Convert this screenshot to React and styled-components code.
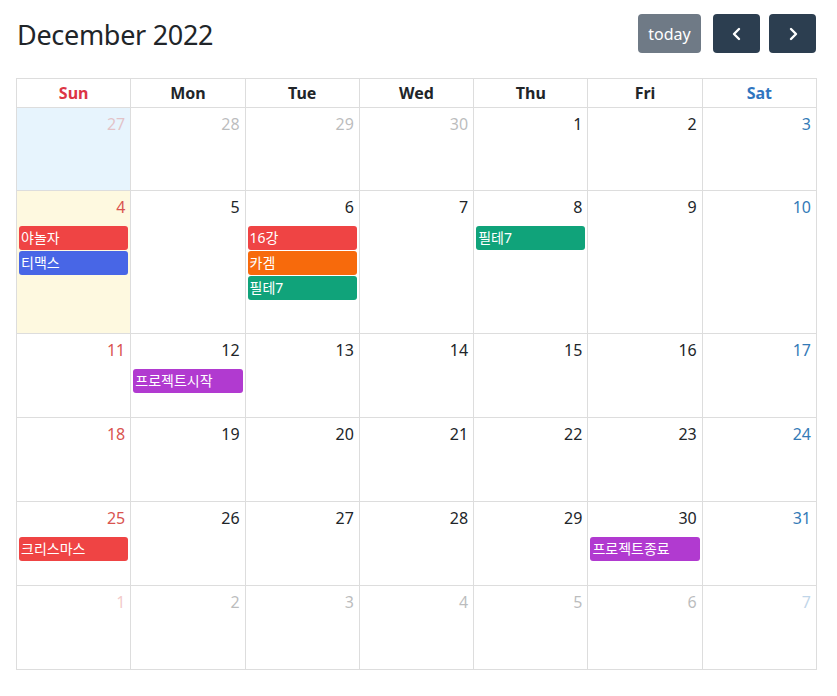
import React from "react";
import styled, { createGlobalStyle } from "styled-components";

const GlobalStyle = createGlobalStyle`
  body {
    margin: 0;
    background: #ffffff;
    font-family: "Noto Sans", "Noto Sans CJK KR", sans-serif;
    color: #212529;
  }
`;

const Page = styled.div`
  width: 800px;
  padding: 14px 0 0 16px;
`;

const Toolbar = styled.div`
  display: flex;
  align-items: center;
  justify-content: space-between;
  height: 39px;
  margin-bottom: 25px;
`;

const Title = styled.h2`
  margin: 2px 0 0 1px;
  font-size: 27px;
  font-weight: 400;
  line-height: 39px;
  color: #212529;
  letter-spacing: -0.3px;
`;

const Buttons = styled.div`
  display: flex;
  align-items: center;
`;

const Button = styled.button`
  height: 39px;
  width: ${({ $width }) => $width}px;
  margin-left: ${({ $gap }) => $gap}px;
  border: none;
  border-radius: 4px;
  background-color: ${({ $muted }) => ($muted ? "#6f7a86" : "#2c3e50")};
  color: #ffffff;
  font-family: "Noto Sans", "Noto Sans CJK KR", sans-serif;
  font-size: 16px;
  display: flex;
  align-items: center;
  justify-content: center;
  padding: 0;
  cursor: pointer;
`;

const Table = styled.div`
  width: 801px;
  border-top: 1px solid #dddddd;
  border-left: 1px solid #dddddd;
  box-sizing: border-box;
`;

const Row = styled.div`
  display: grid;
  grid-template-columns: repeat(7, 1fr);
  min-height: ${({ $height }) => $height}px;
`;

const HeadCell = styled.div`
  height: 29px;
  box-sizing: border-box;
  border-right: 1px solid #dddddd;
  border-bottom: 1px solid #dddddd;
  display: flex;
  align-items: center;
  justify-content: center;
  font-size: 16px;
  font-weight: 700;
  color: ${({ $color }) => $color};
`;

const DayCell = styled.div`
  box-sizing: border-box;
  border-right: 1px solid #dddddd;
  border-bottom: 1px solid #dddddd;
  background-color: ${({ $bg }) => $bg};
  display: flex;
  flex-direction: column;
`;

const DayNumber = styled.div`
  height: 35px;
  box-sizing: border-box;
  padding: 5px 5px 0 0;
  text-align: right;
  font-size: 16px;
  line-height: 22px;
  color: ${({ $color }) => $color};
  opacity: ${({ $faded }) => ($faded ? 0.3 : 1)};
`;

const Event = styled.div`
  height: 24px;
  margin: 0 2px 1px 2px;
  padding-left: 2px;
  border-radius: 3px;
  background-color: ${({ $color }) => $color};
  color: #ffffff;
  font-size: 14px;
  line-height: 23px;
  white-space: nowrap;
  overflow: hidden;
`;

const days = ["Sun", "Mon", "Tue", "Wed", "Thu", "Fri", "Sat"];
const headColors = ["#dc3545", "#212529", "#212529", "#212529", "#212529", "#212529", "#2f75bf"];
const numColors = ["#d9534f", "#212529", "#212529", "#212529", "#212529", "#212529", "#337ab7"];

const RED = "#ef4444";
const BLUE = "#4866e6";
const ORANGE = "#f76a0c";
const GREEN = "#10a37a";
const PURPLE = "#b13ad0";

const events = {
  4: [{ title: "야놀자", color: RED }, { title: "티맥스", color: BLUE }],
  6: [
    { title: "16강", color: RED },
    { title: "카겜", color: ORANGE },
    { title: "필테7", color: GREEN },
  ],
  8: [{ title: "필테7", color: GREEN }],
  12: [{ title: "프로젝트시작", color: PURPLE }],
  25: [{ title: "크리스마스", color: RED }],
  30: [{ title: "프로젝트종료", color: PURPLE }],
};

const buildWeeks = () => {
  const cells = [];
  [27, 28, 29, 30].forEach((d) => cells.push({ day: d, other: true }));
  for (let d = 1; d <= 31; d++) cells.push({ day: d, other: false });
  for (let d = 1; d <= 7; d++) cells.push({ day: d, other: true });
  const weeks = [];
  for (let i = 0; i < cells.length; i += 7) weeks.push(cells.slice(i, i + 7));
  return weeks;
};

const weekHeight = (week, index) => {
  const most = Math.max(...week.map((c) => (c.other ? 0 : (events[c.day] || []).length)));
  if (most > 2) return 35 + most * 25 + 33;
  return index === 0 ? 83 : 84;
};

const cellBackground = (cell, index, w) => {
  if (w === 0 && index === 0) return "#e7f4fd";
  if (!cell.other && cell.day === 4) return "#fef9e0";
  return "#ffffff";
};

const ChevronLeft = () => (
  <svg width="16" height="16" viewBox="0 0 16 16" fill="none">
    <path d="M10 3 L5 8 L10 13" stroke="#ffffff" strokeWidth="2.4" strokeLinecap="round" strokeLinejoin="round" />
  </svg>
);

const ChevronRight = () => (
  <svg width="16" height="16" viewBox="0 0 16 16" fill="none">
    <path d="M6 3 L11 8 L6 13" stroke="#ffffff" strokeWidth="2.4" strokeLinecap="round" strokeLinejoin="round" />
  </svg>
);

const App = () => {
  const weeks = buildWeeks();
  return (
    <Page>
      <GlobalStyle />
      <Toolbar>
        <Title>December 2022</Title>
        <Buttons>
          <Button $muted $width={63} $gap={0}>today</Button>
          <Button $width={47} $gap={12}><ChevronLeft /></Button>
          <Button $width={47} $gap={9}><ChevronRight /></Button>
        </Buttons>
      </Toolbar>
      <Table>
        <Row $height={29}>
          {days.map((d, i) => (
            <HeadCell key={d} $color={headColors[i]}>{d}</HeadCell>
          ))}
        </Row>
        {weeks.map((week, w) => (
          <Row key={w} $height={weekHeight(week, w)}>
            {week.map((cell, i) => (
              <DayCell key={i} $bg={cellBackground(cell, i, w)}>
                <DayNumber $color={numColors[i]} $faded={cell.other}>{cell.day}</DayNumber>
                {!cell.other &&
                  (events[cell.day] || []).map((ev, k) => (
                    <Event key={k} $color={ev.color}>{ev.title}</Event>
                  ))}
              </DayCell>
            ))}
          </Row>
        ))}
      </Table>
    </Page>
  );
};

export default App;
